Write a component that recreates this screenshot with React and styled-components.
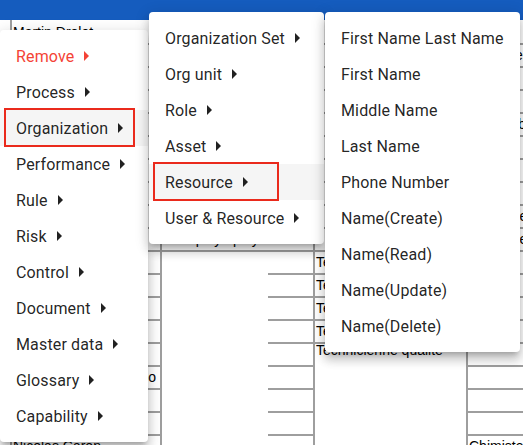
import React from "react";
import styled, { createGlobalStyle } from "styled-components";

const mainMenu = [
  { label: "Remove", danger: true },
  { label: "Process" },
  { label: "Organization", marked: 131 },
  { label: "Performance" },
  { label: "Rule" },
  { label: "Risk" },
  { label: "Control" },
  { label: "Document" },
  { label: "Master data" },
  { label: "Glossary" },
  { label: "Capability" },
];

const orgMenu = [
  { label: "Organization Set" },
  { label: "Org unit" },
  { label: "Role" },
  { label: "Asset" },
  { label: "Resource", marked: 126 },
  { label: "User & Resource" },
];

const resourceMenu = [
  "First Name Last Name",
  "First Name",
  "Middle Name",
  "Last Name",
  "Phone Number",
  "Name(Create)",
  "Name(Read)",
  "Name(Update)",
  "Name(Delete)",
];

// background sheet, one entry per row: [col0, col1, col2, col3]
const rows = Array.from({ length: 19 }, (_, i) => {
  const row = [{ text: "" }, { text: "" }, { text: "" }, { text: "" }];
  if (i === 0) row[0].text = "Martin Drolet";
  if (i === 15) row[0] = { text: "Directeur Groupo", right: true };
  if (i === 18) row[0].text = "Nicolas Caron";
  if (i === 9) row[1].text = "   Employé polyvalent";
  if (i >= 10) row[1].partial = true;
  if (i >= 10 && i <= 13) row[2].text = "Technicien";
  if (i === 14) row[2] = { text: "Technicienne qualité", open: true, raised: true };
  if (i > 14) row[2].open = true;
  if (i === 1) row[3].text = "Analystes";
  if (i === 4) row[3].text = "Comptable";
  if (i === 8) row[3].text = "Technicien";
  if (i === 9) row[3].text = "Technicienne";
  if (i === 18) row[3].text = "Chimiste";
  return row;
});

function Arrow() {
  return (
    <ArrowIcon viewBox="0 0 5 10" aria-hidden="true">
      <path d="M0 0L5 5L0 10Z" />
    </ArrowIcon>
  );
}

function Menu({ items, left, top, width }) {
  return (
    <MenuPaper $left={left} $top={top} $width={width}>
      {items.map((item) => {
        const it = typeof item === "string" ? { label: item, leaf: true } : item;
        return (
          <Item key={it.label} $danger={it.danger} $active={!!it.marked}>
            {it.label}
            {!it.leaf && <Arrow />}
            {it.marked && <Mark $width={it.marked} />}
          </Item>
        );
      })}
    </MenuPaper>
  );
}

export default function App() {
  return (
    <>
      <GlobalStyle />
      <Page>
        <TopBar />
        <Sheet>
          {rows.map((row, r) =>
            row.map((cell, c) => (
              <Cell
                key={`${r}-${c}`}
                $open={cell.open}
                $partial={cell.partial}
                $right={cell.right}
                $raised={cell.raised}
                $tall={r === 0}
              >
                {cell.text}
              </Cell>
            ))
          )}
        </Sheet>
        <Menu items={mainMenu} left={0} top={30} width={148} />
        <Menu items={orgMenu} left={149} top={12} width={175} />
        <Menu items={resourceMenu} left={325} top={12} width={195} />
      </Page>
    </>
  );
}

const GlobalStyle = createGlobalStyle`
  body {
    margin: 0;
    background: #ffffff;
    overflow: hidden;
  }
`;

const Page = styled.div`
  position: relative;
  width: 523px;
  height: 445px;
  overflow: hidden;
  background: #ffffff;
`;

const TopBar = styled.div`
  height: 20px;
  background: #155cbe;
`;

const Sheet = styled.div`
  display: grid;
  grid-template-columns: 150px 153px 153px 160px;
  grid-template-rows: 25px;
  grid-auto-rows: 23px;
  margin-left: 10px;
  border-left: 2px solid #9e9e9e;
  font-family: "Liberation Sans", Arial, sans-serif;
  font-size: 14px;
  color: #000000;
`;

const Cell = styled.div`
  box-sizing: border-box;
  border-right: 2px solid #9e9e9e;
  border-bottom: ${({ $open, $partial }) =>
    $open || $partial ? "none" : "2px solid #9e9e9e"};
  background: ${({ $partial }) =>
    $partial
      ? "linear-gradient(#9e9e9e, #9e9e9e) no-repeat right bottom / 45px 2px"
      : "none"};
  padding: ${({ $tall, $raised }) => ($tall ? "4px" : $raised ? "0" : "2px")}
    4px 0 1px;
  line-height: ${({ $raised }) => ($raised ? "13px" : "17px")};
  white-space: pre;
  overflow: hidden;
  text-align: ${({ $right }) => ($right ? "right" : "left")};
`;

const MenuPaper = styled.ul`
  position: absolute;
  left: ${({ $left }) => $left}px;
  top: ${({ $top }) => $top}px;
  width: ${({ $width }) => $width}px;
  box-sizing: border-box;
  margin: 0;
  padding: 8px 0;
  list-style: none;
  background: #ffffff;
  border-radius: 4px;
  box-shadow: 0px 5px 5px -3px rgba(0, 0, 0, 0.2),
    0px 8px 10px 1px rgba(0, 0, 0, 0.14), 0px 3px 14px 2px rgba(0, 0, 0, 0.12);
  font-family: Roboto, "Noto Sans", sans-serif;
`;

const Item = styled.li`
  position: relative;
  display: flex;
  align-items: center;
  height: 36px;
  padding: 0 16px;
  font-size: 16px;
  letter-spacing: 0.15px;
  white-space: nowrap;
  color: ${({ $danger }) => ($danger ? "#f44336" : "rgba(0, 0, 0, 0.87)")};
  background: ${({ $active }) => ($active ? "#f5f5f5" : "transparent")};
`;

const ArrowIcon = styled.svg`
  width: 5px;
  height: 10px;
  margin-left: 10px;
  fill: currentColor;
  flex-shrink: 0;
`;

const Mark = styled.span`
  position: absolute;
  left: 4px;
  top: -2px;
  bottom: -1px;
  width: ${({ $width }) => $width}px;
  box-sizing: border-box;
  border: 2px solid #ea2a1c;
  pointer-events: none;
`;
